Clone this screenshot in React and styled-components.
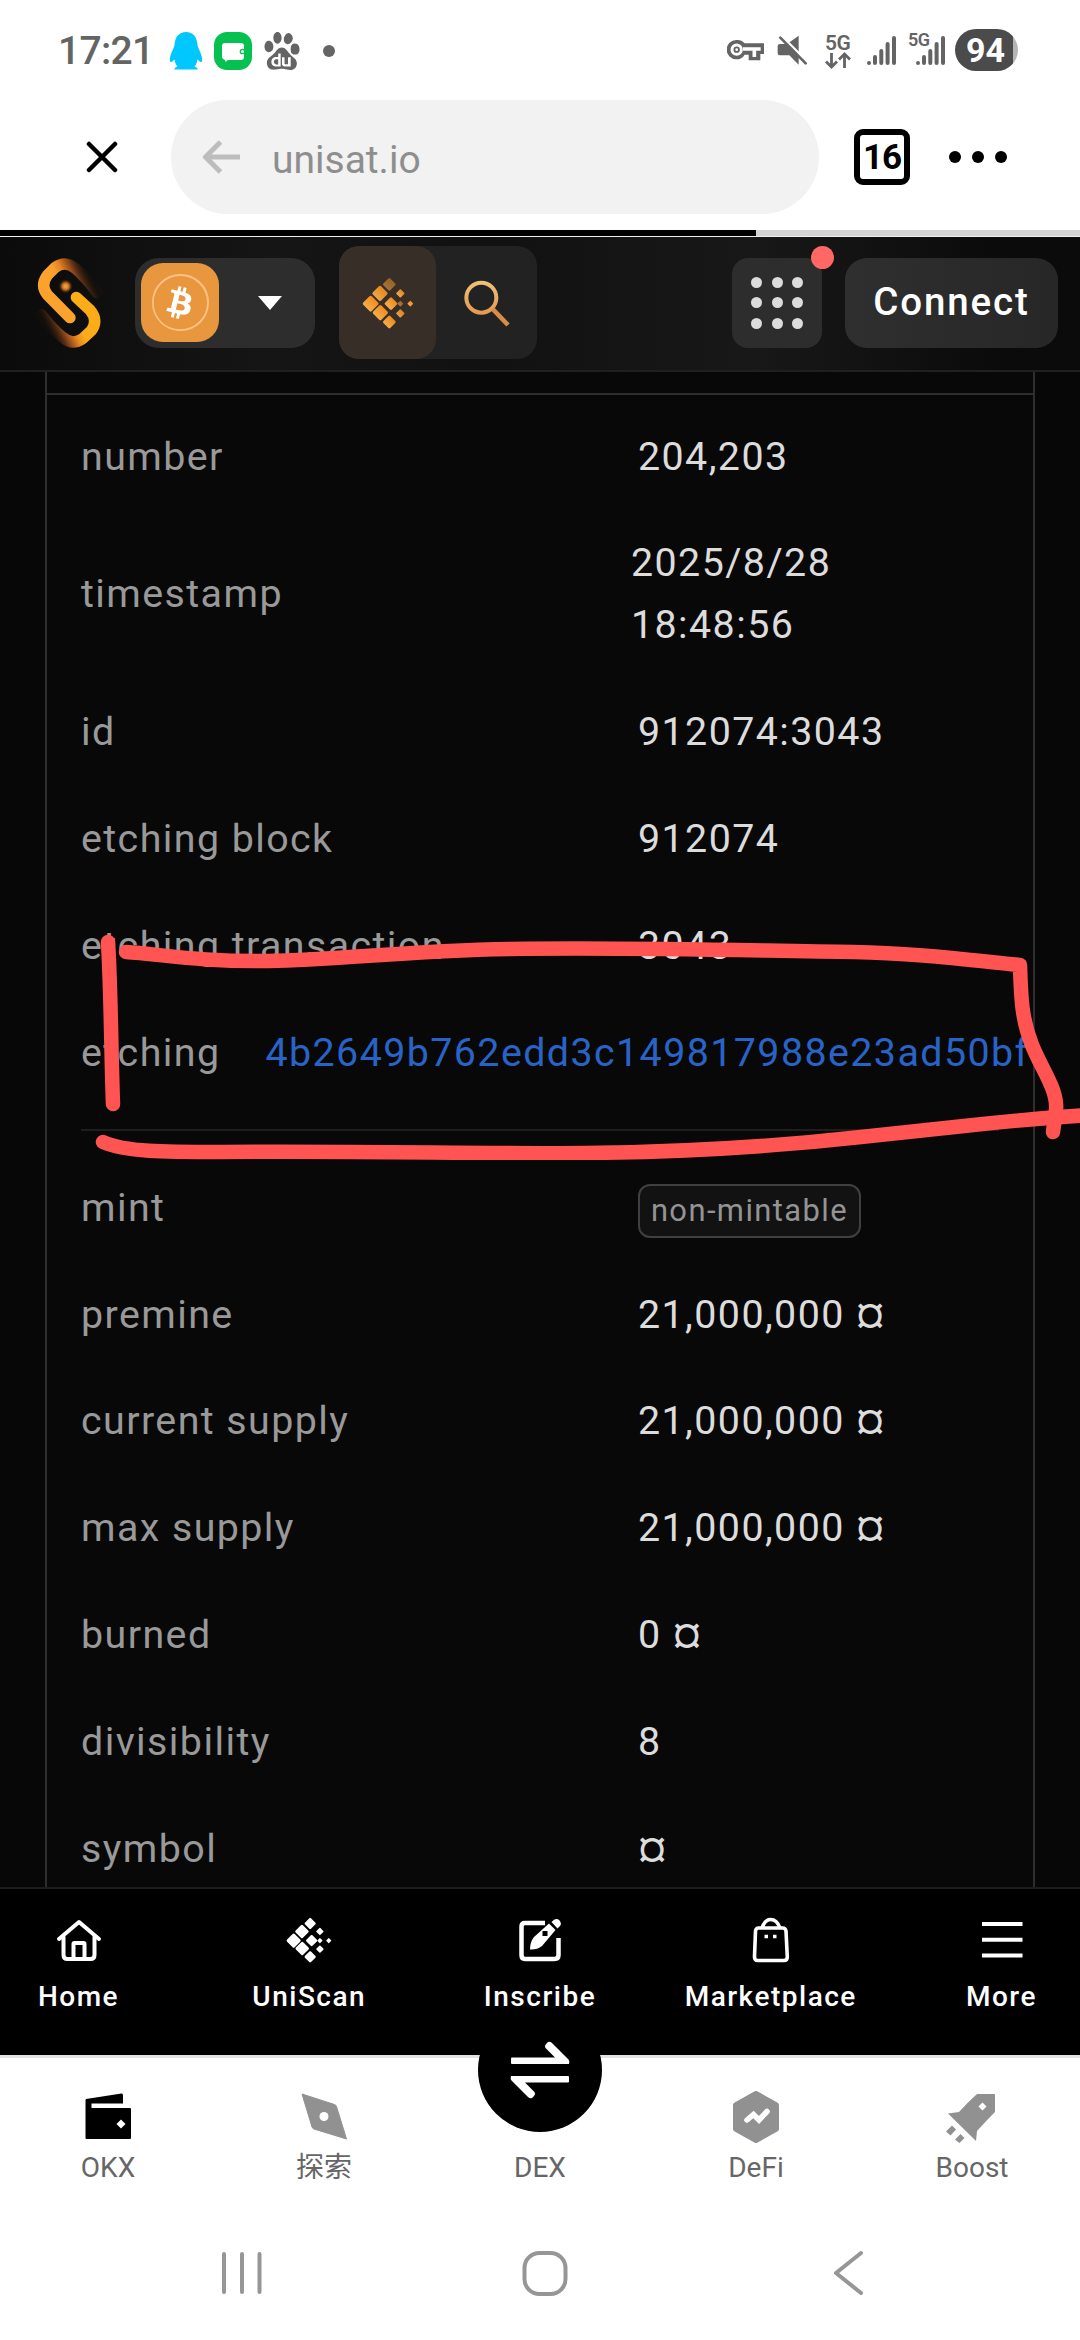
import React from 'react'
import styled, { createGlobalStyle } from 'styled-components'
import { FaBitcoin } from 'react-icons/fa'
import { SiBaidu } from 'react-icons/si'

const details = [
    { label: 'number', value: '204,203' },
    { label: 'timestamp', value: '2025/8/28 18:48:56', wrap: true },
    { label: 'id', value: '912074:3043' },
    { label: 'etching block', value: '912074' },
    { label: 'etching transaction', value: '3043' },
]

const supply = [
    { label: 'premine', value: '21,000,000 ¤' },
    { label: 'current supply', value: '21,000,000 ¤' },
    { label: 'max supply', value: '21,000,000 ¤' },
    { label: 'burned', value: '0 ¤' },
    { label: 'divisibility', value: '8' },
    { label: 'symbol', value: '¤' },
]

// [cx, cy, half diagonal, opacity]
const diamonds = [
    [82, 22, 20, 0.55],
    [54, 49, 24, 0.95],
    [26, 80, 25, 1],
    [55, 107, 24, 1],
    [82, 135, 20, 1],
    [87, 80, 20, 1],
    [115, 49, 13, 0.95],
    [115, 80, 9, 0.6],
    [115, 109, 13, 0.9],
    [145, 80, 9, 1],
]

const ScanIcon = ({ size, solid }) => (
    <svg width={size} height={size} viewBox="0 0 156 156">
        <defs>
            <linearGradient id="scanGold" x1="0" y1="0" x2="0" y2="1">
                <stop offset="0" stopColor="#f08c1c" />
                <stop offset="1" stopColor="#f3ad4e" />
            </linearGradient>
        </defs>
        {diamonds.map(([cx, cy, r, o]) => (
            <rect
                key={`${cx}-${cy}`}
                x={cx - r * 0.73}
                y={cy - r * 0.73}
                width={r * 1.46}
                height={r * 1.46}
                rx={r * 0.2}
                transform={`rotate(45 ${cx} ${cy})`}
                fill={solid ? '#fff' : 'url(#scanGold)'}
                opacity={solid ? 1 : o}
            />
        ))}
    </svg>
)

const UnisatLogo = () => (
    <svg width="70" height="100" viewBox="12 41 210 300" fill="none">
        <defs>
            <linearGradient id="hookTop" gradientUnits="userSpaceOnUse" x1="25" y1="0" x2="106" y2="-40">
                <stop offset="0" stopColor="#fba22c" />
                <stop offset="0.25" stopColor="#e58421" />
                <stop offset="0.55" stopColor="#8f481a" />
                <stop offset="1" stopColor="#2a1408" stopOpacity="0.2" />
            </linearGradient>
            <linearGradient id="hookBottom" gradientUnits="userSpaceOnUse" x1="209" y1="382" x2="128" y2="422">
                <stop offset="0" stopColor="#fbac16" />
                <stop offset="0.25" stopColor="#e98a22" />
                <stop offset="0.55" stopColor="#8f481a" />
                <stop offset="1" stopColor="#2a1408" stopOpacity="0.2" />
            </linearGradient>
            <radialGradient id="spark">
                <stop offset="0.2" stopColor="#f09a3a" />
                <stop offset="0.5" stopColor="#b8651c" />
                <stop offset="1" stopColor="#2a1408" stopOpacity="0" />
            </radialGradient>
        </defs>
        <path
            d="M120 235L52 166Q30 138 52 108L76 84Q106 62 137 88Q165 112 202 160"
            stroke="url(#hookTop)"
            strokeWidth="34"
            strokeLinecap="round"
            strokeLinejoin="round"
        />
        <path
            d="M139 174L180 212Q206 243 184 274L158 298Q127 320 98 294Q68 270 34 226"
            stroke="url(#hookBottom)"
            strokeWidth="34"
            strokeLinecap="round"
            strokeLinejoin="round"
        />
        <circle cx="107" cy="141" r="22" fill="url(#spark)" />
    </svg>
)

const SearchIcon = () => (
    <svg width="48" height="48" viewBox="0 0 144 144" fill="none" strokeWidth="12">
        <defs>
            <linearGradient id="lens" x1="0" y1="0" x2="0" y2="1">
                <stop offset="0" stopColor="#eec078" />
                <stop offset="1" stopColor="#e59b50" />
            </linearGradient>
        </defs>
        <circle cx="55" cy="56" r="45" stroke="url(#lens)" />
        <path d="M89 90L135 138" stroke="#d98c47" strokeWidth="14" />
    </svg>
)

const Penguin = () => (
    <svg width="34" height="38" viewBox="0 0 34 38" fill="#00c8ff">
        <path d="M17 0C24 0 28 5 28.500 13C29 17 34 23 33 29.500C32 31 30 29 28.500 27.500C28 31 27 33 25.500 34.500C28 35.500 29 36.500 28.500 37.500H5.500C5 36.500 6 35.500 8.500 34.500C7 33 6 31 5.500 27.500C4 29 2 31 1 29.500C0 23 5 17 5.500 13C6 5 10 0 17 0Z" />
    </svg>
)

const ChatBadge = () => (
    <svg width="38" height="38" viewBox="0 0 38 38">
        <rect width="38" height="38" rx="13" fill="#06c14f" />
        <path d="M11 11H27Q30 11 30 14V25Q30 28 27 28H14L11.500 30L11 28Q8 27 8 25V14Q8 11 11 11Z" fill="#fff" />
        <circle cx="28.500" cy="19.500" r="2.200" fill="#fff" stroke="#06c14f" strokeWidth="1.300" />
    </svg>
)

const KeyIcon = () => (
    <svg width="37" height="22" viewBox="0 0 111 66">
        <path d="M28 3a29 29 0 1 0 0 58a29 29 0 0 0 25-14H65V64H100V45H111V13H53A29 29 0 0 0 28 3Z" fill="#646464" />
        <path d="M48 30H101M82 30V54" stroke="#fff" strokeWidth="11" fill="none" />
        <circle cx="29" cy="32" r="14" stroke="#fff" strokeWidth="9" fill="none" />
        <circle cx="29" cy="32" r="4" fill="#fff" />
    </svg>
)

const MuteIcon = () => (
    <svg width="30" height="30" viewBox="0 0 90 90" fill="#646464">
        <path d="M2 33Q2 27 8 27H30L65 2V89L37 61H8Q2 61 2 55Z" />
        <path d="M8 -2L94 83" stroke="#fff" strokeWidth="8" />
        <path d="M4 0H24L34 26L17 24L0 24Z" fill="#fff" />
        <path d="M10 8L86 85" stroke="#646464" strokeWidth="8" strokeLinecap="round" />
    </svg>
)

const DataArrows = () => (
    <svg width="26" height="17" viewBox="0 0 26 17" fill="none" stroke="#646464" strokeWidth="2.800">
        <path d="M6.500 1V15M1 9.500L6.500 15L12 9.500M19.500 16V2M14 7.500L19.500 2L25 7.500" />
    </svg>
)

const SignalIcon = () => (
    <svg width="29" height="29" viewBox="0 0 29 29" stroke="#646464" strokeWidth="4" strokeLinecap="round">
        <path d="M2 27V27M8 21V27M14.300 15V27M20.600 8V27M27 2V27" />
    </svg>
)

const HomeIcon = () => (
    <svg width="46" height="46" viewBox="0 0 46 46" fill="none" stroke="#fff" strokeWidth="4" strokeLinecap="round" strokeLinejoin="round">
        <path d="M3 22L23 5L43 22" />
        <path d="M7.500 20V38Q7.500 42 11.500 42H34.500Q38.500 42 38.500 38V20" />
        <path d="M17.500 41V27Q17.500 26 18.500 26H27.500Q28.500 26 28.500 27V41" />
    </svg>
)

const InscribeIcon = () => (
    <svg width="46" height="46" viewBox="0 0 46 46" fill="none" stroke="#fff" strokeWidth="4.500">
        <path d="M28 6H8Q4.500 6 4.500 9.500V38Q4.500 42 8 42H37.500Q41.500 42 41.500 38V21" />
        <path d="M13 32.500Q13 25 17 20L32 6.500L38.500 13L25 29Q20 33 13 32.500Z" fill="#fff" stroke="none" />
        <path d="M34.500 5L37 2.800Q40 1 42.500 3.500Q45 6.500 43 9L40.500 11.500Z" fill="#fff" stroke="none" />
        <rect x="25.500" y="14" width="5" height="5" fill="#000" stroke="none" />
    </svg>
)

const BagIcon = () => (
    <svg width="46" height="46" viewBox="0 0 46 46" fill="none" stroke="#fff" strokeWidth="3.600">
        <path d="M10.500 11H34.500Q37.500 11 38 14L39.300 40Q39.300 43.500 36 43.500H9.500Q6.500 43.500 6.500 40L7.500 14Q8 11 10.500 11Z" />
        <path d="M14 11Q17 2.500 22.500 2.500Q29 2.500 32 11" />
        <path d="M16.500 19.500H20M25 19.500H28.500" />
    </svg>
)

const MenuIcon = () => (
    <svg width="46" height="46" viewBox="0 0 46 46" stroke="#fff" strokeWidth="4">
        <path d="M3 7H43.500M3 22.800H43.500M3 38.500H43.500" />
    </svg>
)

const WalletIcon = () => (
    <svg width="52" height="52" viewBox="0 0 52 52">
        <path d="M4 8L39.500 2.500Q41 2.500 41 4V12.500H9.500V17H48Q49 17 49 18V47Q49 48 48 48H4.500Q3.500 48 3.500 47V9Z" fill="#000" />
        <path d="M39 28.500L43.500 33L39 37.500L34.500 33Z" fill="#fff" />
    </svg>
)

const CompassIcon = () => (
    <svg width="52" height="52" viewBox="0 0 52 52">
        <path d="M4 3L36.500 13.500Q38 14 38.500 15.500L48.500 48L16 38Q14.500 37.500 14 36Z" fill="#919191" stroke="#919191" strokeLinejoin="round" />
        <circle cx="26" cy="25.500" r="4.500" fill="#fff" />
    </svg>
)

const HexIcon = () => (
    <svg width="52" height="52" viewBox="0 0 52 52">
        <path d="M26 2.500L46.500 14V38L26 49.500L5.500 38V14Z" fill="#919191" stroke="#919191" strokeWidth="5" strokeLinejoin="round" />
        <path d="M17 29L23.500 23.500L29 29L37 20.500" fill="none" stroke="#fff" strokeWidth="5.500" strokeLinecap="round" />
    </svg>
)

const RocketIcon = () => (
    <svg width="52" height="52" viewBox="0 0 52 52" fill="#919191">
        <path d="M31 3H48Q49 3 49 4V21Q41 29 31 40L30 50L2 22.500L13 21Q21 12 31 3Z" />
        <path d="M36.500 11.500L40.500 15.500L36.500 19.500L32.500 15.500Z" fill="#fff" />
        <path d="M6 34.500L10 38.500L4.500 44.500L0 40.500ZM14.500 43L18.500 47L13.500 52L9 48.500Z" />
    </svg>
)

const SwapIcon = () => (
    <svg width="60" height="58" viewBox="0 0 60 58" fill="#fff">
        <path d="M2 16.500H45L35.500 7Q34 5 36 3L38 1Q40 0 42 2L58.500 18.500Q60 20 59 23H2Q1 23 1 22V17.500Q1 16.500 2 16.500Z" />
        <path d="M58 41.500H15L24.500 51Q26 53 24 55L22 57Q20 58 18 56L1.500 39.500Q0 38 1 35H58Q59 35 59 36V40.500Q59 41.500 58 41.500Z" />
    </svg>
)

const siteTabs = [
    { label: 'Home', icon: <HomeIcon /> },
    { label: 'UniScan', icon: <ScanIcon size={46} solid /> },
    { label: 'Inscribe', icon: <InscribeIcon /> },
    { label: 'Marketplace', icon: <BagIcon /> },
    { label: 'More', icon: <MenuIcon /> },
]

const App = () => {
    return (
        <Screen>
            <GlobalStyle />
            <StatusBar>
                <Clock>17:21</Clock>
                <Notifications>
                    <Penguin />
                    <ChatBadge />
                    <SiBaidu size={38} />
                    <StatusDot />
                </Notifications>
                <Signals>
                    <KeyIcon />
                    <MuteIcon />
                    <DataType>
                        5G
                        <DataArrows />
                    </DataType>
                    <SignalIcon />
                    <SecondSim>
                        <SimLabel>5G</SimLabel>
                        <SignalIcon />
                    </SecondSim>
                    <Battery>94</Battery>
                </Signals>
            </StatusBar>

            <BrowserBar>
                <svg width="32" height="32" viewBox="0 0 32 32" stroke="#000" strokeWidth="4.500" strokeLinecap="round">
                    <path d="M3 3L29 29M29 3L3 29" />
                </svg>
                <AddressBar>
                    <svg width="38" height="34" viewBox="0 0 38 34" fill="none" stroke="#bdbdbd" strokeWidth="5">
                        <path d="M38 17H4M18.500 2L3.500 17L18.500 32" strokeLinejoin="round" />
                    </svg>
                    <Address>unisat.io</Address>
                </AddressBar>
                <TabCount>16</TabCount>
                <Dots>
                    <i />
                    <i />
                    <i />
                </Dots>
            </BrowserBar>
            <Progress />

            <SiteHeader>
                <UnisatLogo />
                <ChainSelect>
                    <ChainIcon>
                        <CoinRing>
                            <FaBitcoin size={54} />
                        </CoinRing>
                    </ChainIcon>
                    <Caret />
                </ChainSelect>
                <SearchGroup>
                    <ScanTab>
                        <ScanIcon size={52} />
                    </ScanTab>
                    <SearchIcon />
                </SearchGroup>
                <AppsButton>
                    {Array.from({ length: 9 }, (_, i) => (
                        <i key={i} />
                    ))}
                    <AlertDot />
                </AppsButton>
                <ConnectButton>Connect</ConnectButton>
            </SiteHeader>

            <Content>
                <Card>
                    <CardTop />
                    <CardBody>
                        {details.map((row) => (
                            <Row key={row.label}>
                                <Label>{row.label}</Label>
                                <Value $wrap={row.wrap}>{row.value}</Value>
                            </Row>
                        ))}
                        <Row>
                            <Label>etching</Label>
                            <HashLink>4b2649b762edd3c149817988e23ad50bfa</HashLink>
                        </Row>
                        <Divider />
                        <Row>
                            <Label>mint</Label>
                            <Value>
                                <Tag>non-mintable</Tag>
                            </Value>
                        </Row>
                        {supply.map((row) => (
                            <Row key={row.label}>
                                <Label>{row.label}</Label>
                                <Value>{row.value}</Value>
                            </Row>
                        ))}
                    </CardBody>
                </Card>
            </Content>

            <SiteNav>
                {siteTabs.map((tab) => (
                    <SiteTab key={tab.label}>
                        {tab.icon}
                        <span>{tab.label}</span>
                    </SiteTab>
                ))}
            </SiteNav>

            <WalletNav>
                <WalletTab>
                    <WalletIcon />
                    <span>OKX</span>
                </WalletTab>
                <WalletTab>
                    <CompassIcon />
                    <span>探索</span>
                </WalletTab>
                <WalletTab>
                    <SwapButton>
                        <SwapIcon />
                    </SwapButton>
                    <span>DEX</span>
                </WalletTab>
                <WalletTab>
                    <HexIcon />
                    <span>DeFi</span>
                </WalletTab>
                <WalletTab>
                    <RocketIcon />
                    <span>Boost</span>
                </WalletTab>
            </WalletNav>

            <SystemNav>
                <svg width="48" height="48" viewBox="0 0 48 48">
                    <path d="M6 5V43M24 5V43M41.500 5V43" />
                </svg>
                <svg width="48" height="48" viewBox="0 0 48 48">
                    <rect x="3.500" y="4" width="41" height="41" rx="15" />
                </svg>
                <svg width="48" height="48" viewBox="0 0 48 48">
                    <path d="M37 4L12 24L37 44" />
                </svg>
            </SystemNav>

            <Marker viewBox="0 0 1080 240">
                <path d="M108 22C111 70 111 130 113 184" />
                <path d="M126 32C160 34 200 42 269 41C340 40 400 31 510 29C640 27 760 31 854 32C910 33 960 39 1020 45C1021 80 1022 100 1032 125C1042 150 1058 170 1056 190L1053 212" />
                <path d="M103 222C125 232 165 232 220 232C380 231 480 234 585 233C700 232 780 226 861 217C900 213 925 210 964 206C1000 202 1040 198 1090 195" />
            </Marker>
        </Screen>
    )
}

const GlobalStyle = createGlobalStyle`
    * {
        box-sizing: border-box;
    }

    body {
        margin: 0;
        background-color: #fff;
        font-family: Roboto, "Noto Sans CJK SC", sans-serif;
    }

    svg {
        display: block;
        flex-shrink: 0;
    }
`

const Screen = styled.div`
    position: relative;
    width: 1080px;
    height: 2340px;
    display: flex;
    flex-direction: column;
    overflow: hidden;
    background-color: #fff;
`

const StatusBar = styled.div`
    height: 100px;
    padding: 0 62px 0 58px;
    display: flex;
    align-items: center;
    color: #646464;
`

const Clock = styled.div`
    width: 111px;
    padding-top: 2px;
    font-size: 39px;
    font-weight: 500;
    letter-spacing: -0.7px;
`

const Notifications = styled.div`
    display: flex;
    align-items: center;
    gap: 11px;
    padding-top: 2px;
`

const StatusDot = styled.i`
    width: 12px;
    height: 12px;
    margin-left: 11px;
    border-radius: 50%;
    background-color: #646464;
`

const Signals = styled.div`
    display: flex;
    align-items: center;
    margin-left: auto;

    svg + svg {
        margin-left: 13px;
    }
`

const DataType = styled.div`
    width: 26px;
    margin: 0 16px 0 18px;
    padding-top: 3px;
    font-size: 21px;
    line-height: 18px;
    font-weight: 600;
    letter-spacing: -0.5px;
`

const SecondSim = styled.div`
    position: relative;
    margin: 0 10px 0 20px;
`

const SimLabel = styled.span`
    position: absolute;
    left: -8px;
    top: -3px;
    font-size: 18px;
    line-height: 14px;
    font-weight: 600;
    letter-spacing: -0.5px;
`

const Battery = styled.div`
    width: 63px;
    height: 42px;
    padding-right: 2px;
    border-radius: 21px;
    background: linear-gradient(90deg, #4b4b4b 58px, #b5b5b5 58px);
    color: #fff;
    font-size: 34px;
    line-height: 43px;
    font-weight: 700;
    text-align: center;
`

const BrowserBar = styled.div`
    height: 130px;
    padding: 0 73px 16px 86px;
    display: flex;
    align-items: center;
`

const AddressBar = styled.div`
    width: 649px;
    height: 114px;
    margin-left: 53px;
    padding-left: 31px;
    border-radius: 57px;
    display: flex;
    align-items: center;
    gap: 32px;
    background-color: #f2f2f2;
`

const Address = styled.span`
    padding-top: 5px;
    color: #8e8e8e;
    font-size: 39px;
    line-height: 50px;
`

const TabCount = styled.div`
    width: 56px;
    height: 56px;
    margin-left: 35px;
    border: 6px solid #000;
    border-radius: 9px;
    font-size: 35px;
    font-weight: 700;
    line-height: 46px;
    text-align: center;
    letter-spacing: -1px;
`

const Dots = styled.div`
    display: flex;
    gap: 11px;
    margin-left: 39px;

    i {
        width: 12px;
        height: 12px;
        border-radius: 50%;
        background-color: #000;
    }
`

const Progress = styled.div`
    height: 7px;
    border-bottom: 1px solid #f0f0f0;
    background: linear-gradient(90deg, #000 756px, #d4d4d4 756px);
`

const SiteHeader = styled.header`
    height: 135px;
    padding: 0 22px 2px 34px;
    border-bottom: 2px solid #202020;
    display: flex;
    align-items: center;
    background: linear-gradient(90deg, #0b0b0b, #151515 25%, #111 45%, #181818 70%, #0b0b0b 92%);
`

const ChainSelect = styled.div`
    width: 180px;
    height: 90px;
    margin-left: 31px;
    padding-left: 6px;
    border-radius: 24px;
    display: flex;
    align-items: center;
    background-color: #2d2d2d;
`

const ChainIcon = styled.div`
    width: 78px;
    height: 79px;
    border-radius: 22px;
    display: flex;
    align-items: center;
    justify-content: center;
    background-color: #e8973e;
`

const CoinRing = styled.div`
    width: 57px;
    height: 57px;
    border: 2px solid #fbc283;
    border-radius: 50%;
    display: flex;
    align-items: center;
    justify-content: center;
    background: radial-gradient(circle, #fff 21px, transparent 22px);
    color: #e8973e;
`

const Caret = styled.i`
    margin-left: 39px;
    border: 12px solid transparent;
    border-top: 14px solid #fff;
    border-bottom: 0;
`

const SearchGroup = styled.div`
    width: 198px;
    height: 113px;
    margin-left: 24px;
    border-radius: 20px;
    display: flex;
    align-items: center;
    gap: 27px;
    background-color: #222;
`

const ScanTab = styled.div`
    width: 97px;
    height: 113px;
    border-radius: 20px;
    display: flex;
    align-items: center;
    justify-content: center;
    background-color: #362e27;
`

const AppsButton = styled.div`
    position: relative;
    width: 90px;
    height: 90px;
    margin-left: auto;
    border-radius: 16px;
    display: grid;
    grid-template-columns: repeat(3, 11px);
    gap: 9.500px;
    place-content: center;
    background-color: #2d2d2d;

    i {
        height: 11px;
        border-radius: 50%;
        background-color: #dcdcdc;
    }
`

const AlertDot = styled.span`
    position: absolute;
    top: -12px;
    right: -12px;
    width: 23px;
    height: 23px;
    border-radius: 50%;
    background-color: #ff6864;
`

const ConnectButton = styled.div`
    width: 213px;
    height: 90px;
    margin-left: 23px;
    border-radius: 22px;
    background: linear-gradient(90deg, #2f2f2f, #272727);
    color: #fff;
    font-size: 38.500px;
    font-weight: 500;
    letter-spacing: 1.900px;
    line-height: 88px;
    text-align: center;
`

const Content = styled.main`
    height: 1515px;
    padding: 0 45px;
    background-color: #070707;
    overflow: hidden;
`

const Card = styled.section`
    border: 2px solid #2e2e2e;
    border-width: 0 2px;
    overflow: hidden;
    background-color: #080808;
`

const CardTop = styled.div`
    height: 23px;
    border-bottom: 2px solid #2e2e2e;
`

const CardBody = styled.div`
    padding: 8px 34px 0;
    font-size: 39.375px;
    line-height: 61.875px;
    letter-spacing: 1.430px;
    white-space: nowrap;
`

const Row = styled.div`
    display: flex;
    align-items: center;
    justify-content: space-between;
    padding: 22.500px 0;
`

const Label = styled.div`
    color: #999;
`

const Value = styled.div`
    width: ${(props) => (props.$wrap ? '368px' : '361px')};
    padding-right: ${(props) => (props.$wrap ? '120px' : '0')};
    white-space: ${(props) => (props.$wrap ? 'normal' : 'nowrap')};
    color: #dcdcdc;
`

const HashLink = styled.div`
    flex: 1;
    margin-left: 45px;
    color: #2864c8;
`

const Divider = styled.hr`
    height: 2px;
    margin: 23px 0;
    border: 0;
    background-color: #1e1e1e;
`

const Tag = styled.span`
    display: block;
    width: 223px;
    height: 54px;
    margin: 7px 0 0.875px;
    border: 2px solid #404040;
    border-radius: 12px;
    background-color: #121212;
    color: #949494;
    font-size: 30.900px;
    line-height: 49px;
    letter-spacing: 1.430px;
    text-align: center;
`

const SiteNav = styled.nav`
    height: 168px;
    border-top: 2px solid #1c1c1c;
    display: flex;
    justify-content: space-between;
    background-color: #000;
`

const SiteTab = styled.div`
    width: 157px;
    padding-top: 28px;
    display: flex;
    flex-direction: column;
    align-items: center;
    gap: 16px;
    color: #fff;
    font-size: 28px;
    font-weight: 500;
    line-height: 36px;
    letter-spacing: 1.500px;
    white-space: nowrap;
`

const WalletNav = styled.nav`
    height: 145px;
    border-top: 3px solid #e2e2e2;
    display: grid;
    grid-template-columns: repeat(5, 1fr);
`

const WalletTab = styled.div`
    position: relative;
    display: flex;
    flex-direction: column;
    align-items: center;
    justify-content: flex-end;
    gap: 8px;
    color: #666;
    font-size: 28px;
    line-height: 34px;
    padding-bottom: 15px;
`

const SwapButton = styled.div`
    position: absolute;
    top: -50px;
    width: 124px;
    height: 124px;
    border-radius: 50%;
    display: flex;
    align-items: center;
    justify-content: center;
    background-color: #000;
`

const SystemNav = styled.nav`
    height: 140px;
    padding: 6px 208px 0 218px;
    display: flex;
    align-items: center;
    justify-content: space-between;

    svg {
        fill: none;
        stroke: #969696;
        stroke-width: 4px;
        stroke-linecap: round;
        stroke-linejoin: round;
    }
`

// hand drawn highlight lying over the etching row
const Marker = styled.svg`
    position: absolute;
    top: 920px;
    left: 0;
    width: 1080px;
    height: 240px;
    fill: none;
    stroke: #ff5451;
    stroke-width: 14.500px;
    stroke-linecap: round;
    stroke-linejoin: round;
`

export default App
